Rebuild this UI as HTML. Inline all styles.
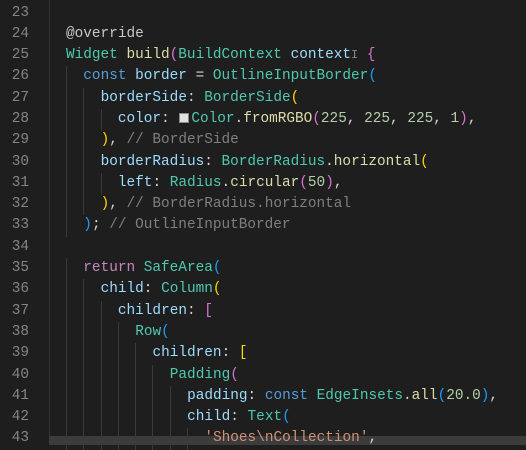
<!DOCTYPE html>
<html><head><style>
html,body{margin:0;padding:0;background:#1e1e1e;width:526px;height:445px;overflow:hidden}
#ed{position:absolute;left:0;top:2.5px;width:526px;font-family:"Liberation Mono",monospace;font-size:14.4px;}
.l{height:21.3px;line-height:21.3px;white-space:pre;position:relative;color:#d4d4d4}
.n{position:absolute;left:0;width:29px;text-align:right;color:#858585}
.c{position:absolute;left:66px}
i{display:inline-block;width:17.3px;height:21.3px;vertical-align:top;box-shadow:inset 1px 0 0 #3a3a3a}
.g{position:absolute;left:49px;top:0;width:1px;height:445px;background:#333}
.t{color:#4ec9b0}.f{color:#dcdcaa}.k{color:#569cd6}.v{color:#9cdcfe}.cm{color:#7f7f7f}.num{color:#b5cea8}.s{color:#ce9178}.r{color:#c586c0}.a{color:#c8c8c8}
.y{color:#ffd700}.p{color:#da70d6}.b{color:#179fff}
.sq{display:inline-block;width:10px;height:10px;background:#e1e1e1;margin:0 2px 0 1px;vertical-align:-1px;border:1px solid #888;box-sizing:border-box}
.cur{color:#888;font-size:12px}
#bar{position:absolute;left:49px;top:436px;width:477px;height:9px;background:#3c3c3c}
</style></head><body>
<div class="g"></div>
<div id="bar"></div>
<div id="ed">
<div class="l"><span class="n">23</span></div>
<div class="l"><span class="n">24</span><span class="c"><span class="a">@override</span></span></div>
<div class="l"><span class="n">25</span><span class="c"><span class="t">Widget</span> <span class="f">build</span><span class="p">(</span><span class="t">BuildContext</span> <span class="v">context</span><span class="cur">I</span> <span class="p">{</span></span></div>
<div class="l"><span class="n">26</span><span class="c"><i></i><span class="k">const</span> <span class="v">border</span> = <span class="t">OutlineInputBorder</span><span class="b">(</span></span></div>
<div class="l"><span class="n">27</span><span class="c"><i></i><i></i><span class="v">borderSide</span>: <span class="t">BorderSide</span><span class="y">(</span></span></div>
<div class="l"><span class="n">28</span><span class="c"><i></i><i></i><i></i><span class="v">color</span>: <span class="sq"></span><span class="t">Color</span>.<span class="f">fromRGBO</span><span class="p">(</span><span class="num">225</span>, <span class="num">225</span>, <span class="num">225</span>, <span class="num">1</span><span class="p">)</span>,</span></div>
<div class="l"><span class="n">29</span><span class="c"><i></i><i></i><span class="y">)</span>, <span class="cm">// BorderSide</span></span></div>
<div class="l"><span class="n">30</span><span class="c"><i></i><i></i><span class="v">borderRadius</span>: <span class="t">BorderRadius</span>.<span class="f">horizontal</span><span class="y">(</span></span></div>
<div class="l"><span class="n">31</span><span class="c"><i></i><i></i><i></i><span class="v">left</span>: <span class="t">Radius</span>.<span class="f">circular</span><span class="p">(</span><span class="num">50</span><span class="p">)</span>,</span></div>
<div class="l"><span class="n">32</span><span class="c"><i></i><i></i><span class="y">)</span>, <span class="cm">// BorderRadius.horizontal</span></span></div>
<div class="l"><span class="n">33</span><span class="c"><i></i><span class="b">)</span>; <span class="cm">// OutlineInputBorder</span></span></div>
<div class="l"><span class="n">34</span></div>
<div class="l"><span class="n">35</span><span class="c"><i></i><span class="r">return</span> <span class="t">SafeArea</span><span class="b">(</span></span></div>
<div class="l"><span class="n">36</span><span class="c"><i></i><i></i><span class="v">child</span>: <span class="t">Column</span><span class="y">(</span></span></div>
<div class="l"><span class="n">37</span><span class="c"><i></i><i></i><i></i><span class="v">children</span>: <span class="p">[</span></span></div>
<div class="l"><span class="n">38</span><span class="c"><i></i><i></i><i></i><i></i><span class="t">Row</span><span class="b">(</span></span></div>
<div class="l"><span class="n">39</span><span class="c"><i></i><i></i><i></i><i></i><i></i><span class="v">children</span>: <span class="y">[</span></span></div>
<div class="l"><span class="n">40</span><span class="c"><i></i><i></i><i></i><i></i><i></i><i></i><span class="t">Padding</span><span class="p">(</span></span></div>
<div class="l"><span class="n">41</span><span class="c"><i></i><i></i><i></i><i></i><i></i><i></i><i></i><span class="v">padding</span>: <span class="k">const</span> <span class="t">EdgeInsets</span>.<span class="f">all</span><span class="b">(</span><span class="num">20.0</span><span class="b">)</span>,</span></div>
<div class="l"><span class="n">42</span><span class="c"><i></i><i></i><i></i><i></i><i></i><i></i><i></i><span class="v">child</span>: <span class="t">Text</span><span class="b">(</span></span></div>
<div class="l"><span class="n">43</span><span class="c"><i></i><i></i><i></i><i></i><i></i><i></i><i></i><i></i><span class="s">'Shoes\nCollection'</span>,</span></div>
</div>
</body></html>
